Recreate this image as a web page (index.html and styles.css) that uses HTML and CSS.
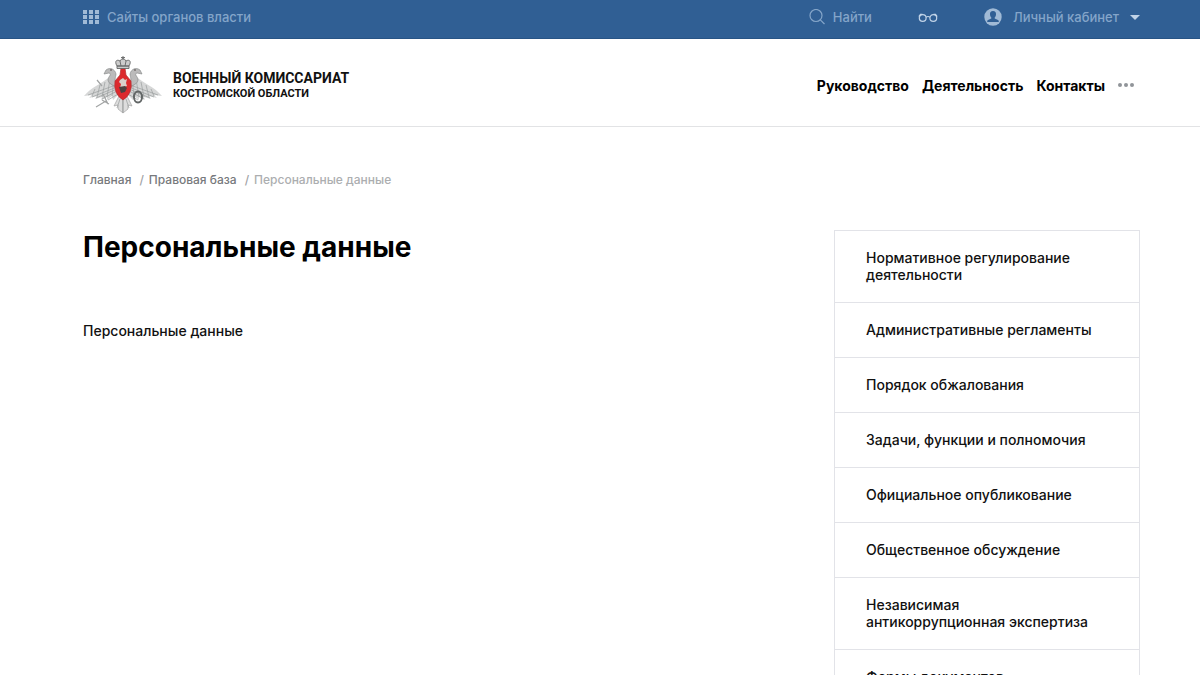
FILE: index.html
```html
<!DOCTYPE html>
<html lang="ru">
<head>
<meta charset="utf-8">
<title>Персональные данные</title>
<link rel="stylesheet" href="styles.css">
</head>
<body>
<div class="topbar">
  <div class="container topbar-row">
    <a class="top-link" href="#">
      <svg class="icon-grid" viewBox="0 0 16 14" width="16" height="14" fill="currentColor"><path d="M0 0h4v4H0zM6 0h4v4H6zM12 0h4v4h-4zM0 5h4v4H0zM6 5h4v4H6zM12 5h4v4h-4zM0 10h4v4H0zM6 10h4v4H6zM12 10h4v4h-4z"/></svg>
      <span>Сайты органов власти</span>
    </a>
    <div class="top-tools">
      <button class="top-link" type="button">
        <svg viewBox="0 0 16 16" width="16" height="16" fill="none" stroke="currentColor" stroke-width="1.2"><circle cx="7" cy="6.500" r="6"/><path d="M11.300 10.800 15.500 15"/></svg>
        <span>Найти</span>
      </button>
      <button class="top-link glasses" type="button" aria-label="Версия для слабовидящих">
        <svg viewBox="0 0 20 10" width="20" height="10" fill="none" stroke="currentColor" stroke-width="1.200"><circle cx="4.700" cy="6" r="3.400"/><circle cx="15.300" cy="6" r="3.400"/><path d="M8 5.200Q10 3.800 12 5.200M.8 4.500 2.500 2.300h2M19.200 4.500 17.500 2.300h-2"/></svg>
      </button>
      <button class="top-link account" type="button">
        <svg class="icon-user" viewBox="0 0 18 18" width="18" height="18"><circle cx="9" cy="9" r="8.700" fill="currentColor"/><path class="user-cut" d="M9 3c2.200 0 3.200 1.500 3 3.400-.1 1.200-.6 2.300-1.300 3v1.200l3.300 1.500c.5.300.8.800.8 1.400v.5H3.200v-.5c0-.6.300-1.100.8-1.400l3.300-1.500V9.400C6.600 8.700 6.100 7.600 6 6.400 5.800 4.500 6.800 3 9 3z"/></svg>
        <span>Личный кабинет</span>
        <svg class="caret" viewBox="0 0 10 5" width="10" height="5" fill="currentColor"><path d="M0 0h10L5 5z"/></svg>
      </button>
    </div>
  </div>
</div>
<header class="header">
  <div class="container header-row">
    <a class="brand" href="#">
      <svg class="emblem" viewBox="0 0 80 58" width="80" height="58" aria-hidden="true">
        <g id="wing-half">
          <path class="wing" d="M34 27C31 20 27 21 21 25 15 29 8 32 1 40l8-1-3 3 8-2-2 3 7-2-1 3 6-3 0 3 5-4 1 4 5-5z"/>
          <path class="feather" d="M33 29 5 39M34 31 9 41M34 33 13 42M34 35 19 43M35 38 25 44M31 23 29 40M27 23 24 41M22 26 19 41M17 29 14 41M12 33 9 40"/>
          <path class="neck" d="M35 29c-5-4-2-8-2-11-1-5-6-7-10-4l-2 4 5-1c3 1 0 3-1 6 0 4 3 6 9 8z"/>
          <circle class="ink" cx="28" cy="14" r=".8"/>
          <path class="tail" d="M36 40l-5 10 4-1 0 4 5 4V40z"/>
        </g>
        <use href="#wing-half" transform="matrix(-1 0 0 1 80 0)"/>
        <path class="feather" d="M37 43l-3 9M40 44v12M43 43l3 9"/>
        <path class="shield" d="M38 12h4l1 7 5 6q1 6-1 11-2 5-7 8-5-3-7-8-2-5-1-11l5-6z"/>
        <path class="rider" d="M37 24l3-2 2 2 2-1-1 4 1 3-3 1-1 3-3-2 1-4-2-2z"/>
        <path class="ink" d="M36 31l6-1 2 2-2 4-4 1z"/>
        <path class="crown" d="M34 10c-3-5 0-7 3-5q3-5 6 0c3-2 6 0 3 5zM34 10h12v2.500H34zM37 5l1 5M43 5l-1 5M40 0v4M38 1.500h4"/>
        <path class="sword" d="M20 38l5 10M13 51l10-6M19 44l7 4M14 24l5 6"/>
        <ellipse class="wreath" cx="55" cy="41" rx="4" ry="5.500"/>
      </svg>
      <span class="brand-text"><strong>ВОЕННЫЙ КОМИССАРИАТ</strong><small>КОСТРОМСКОЙ ОБЛАСТИ</small></span>
    </a>
    <nav class="nav">
      <a href="#">Руководство</a>
      <a href="#">Деятельность</a>
      <a href="#">Контакты</a>
      <button class="more" type="button" aria-label="Ещё"><svg viewBox="0 0 16 4" width="16" height="4" fill="currentColor"><circle cx="2" cy="2" r="2"/><circle cx="8" cy="2" r="2"/><circle cx="14" cy="2" r="2"/></svg></button>
    </nav>
  </div>
</header>
<div class="container page">
  <nav class="crumbs">
    <a href="#">Главная</a><span class="sep">/</span><a href="#">Правовая база</a><span class="sep">/</span><span class="current">Персональные данные</span>
  </nav>
  <div class="columns">
    <main class="content">
      <h1>Персональные данные</h1>
      <a class="doc" href="#">Персональные данные</a>
    </main>
    <aside class="side">
      <a href="#">Нормативное регулирование деятельности</a>
      <a href="#">Административные регламенты</a>
      <a href="#">Порядок обжалования</a>
      <a href="#">Задачи, функции и полномочия</a>
      <a href="#">Официальное опубликование</a>
      <a href="#">Общественное обсуждение</a>
      <a href="#">Независимая антикоррупционная экспертиза</a>
      <a href="#">Формы документов</a>
    </aside>
  </div>
</div>
</body>
</html>
```
FILE: styles.css
```css
* { box-sizing: border-box; }
html { scrollbar-width: none; }
body { margin: 0; background: #fff; color: #111; font-family: Inter, "Noto Sans", sans-serif; font-size: 14px; font-weight: 500; }
a { color: inherit; text-decoration: none; }
button { border: 0; padding: 0; background: none; font: inherit; color: inherit; }
.container { padding: 0 60px 0 83px; }
.topbar { background: #305f94; border-bottom: 1px solid #285485; color: #84a5c9; font-size: 13px; }
.topbar-row { display: flex; justify-content: space-between; align-items: center; height: 38px; padding-bottom: 4px; }
.top-link { display: flex; align-items: center; gap: 8px; }
.icon-grid { color: #a0bad6; }
.top-tools { display: flex; align-items: center; gap: 46px; }
.glasses, .caret { color: #c0d3e8; }
.icon-user { color: #a0bad6; }
.account { gap: 11px; }
.user-cut { fill: #305f94; }
.header { border-bottom: 1px solid #e2e3e5; }
.header-row { display: flex; justify-content: space-between; align-items: center; height: 87px; padding-top: 5px; }
.brand { display: flex; align-items: center; gap: 10px; }
.brand-text { display: flex; flex-direction: column; font-family: Roboto, sans-serif; }
.brand-text strong { font-size: 14px; line-height: 17px; font-weight: 700; }
.brand-text small { font-size: 11px; line-height: 13px; font-weight: 700; }
.nav { display: flex; align-items: center; gap: 13px; padding-right: 6px; color: #000; font-weight: 700; }
.more { display: flex; color: #909499; }
.crumbs { display: flex; padding-top: 45px; font-size: 12px; line-height: 16px; color: #77797c; }
.sep { margin: 0 5px 0 8px; color: #a0a2a5; }
.current { color: #acaeb0; }
.columns { display: flex; gap: 40px; margin-top: 42px; }
.content { flex: 1; }
h1 { margin: 0; color: #000; font-size: 28px; line-height: 34px; font-weight: 700; }
.doc { display: block; margin-top: 58px; line-height: 18px; }
.side { width: 306px; border: 1px solid #e2e3e8; border-bottom: 0; }
.side a { display: block; padding: 18px 40px 19px 31px; line-height: 17px; border-bottom: 1px solid #e2e3e8; }
.wing { fill: #d6d7d7; }
.feather { fill: none; stroke: #9a9d9e; stroke-width: .7; }
.neck { fill: #bbb; stroke: #808383; stroke-width: .6; }
.tail { fill: #ddd; stroke: #999; stroke-width: .6; }
.shield { fill: #dc2a2d; stroke: #b03033; stroke-width: .7; }
.rider { fill: #d8cfca; }
.ink { fill: #4c4140; }
.crown { fill: #ccc; stroke: #656767; stroke-width: .9; }
.sword { fill: none; stroke: #a2a4a4; stroke-width: 1.200; }
.wreath { fill: none; stroke: #616565; stroke-width: 2; }
```
